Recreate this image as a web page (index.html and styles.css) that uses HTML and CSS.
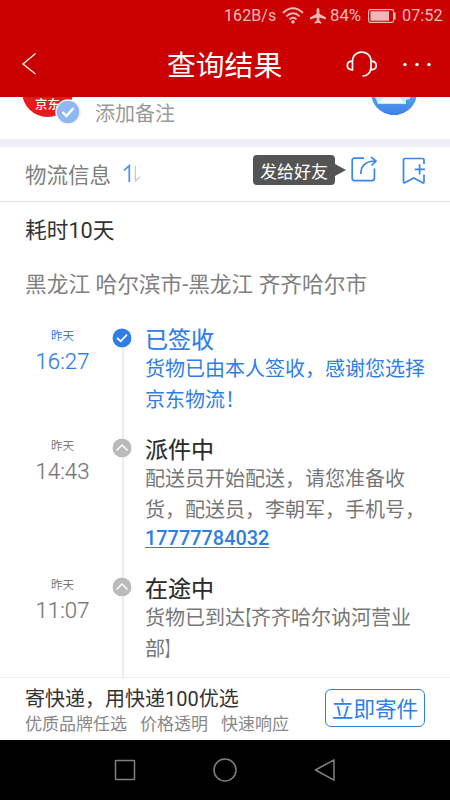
FILE: index.html
```html
<!DOCTYPE html>
<html lang="zh-CN">
<head>
<meta charset="utf-8">
<meta name="viewport" content="width=device-width, initial-scale=1">
<title>查询结果</title>
<link rel="stylesheet" href="styles.css">
</head>
<body>
<div class="phone">
  <div class="status">
    <span class="speed">162B/s</span>
    <svg class="wifi" width="22" height="17" viewBox="0 0 22 17" fill="none" stroke="currentColor" stroke-width="1.900"><path d="M1 6Q11-3.500 21 6M4.300 9.400Q11 3.200 17.700 9.400M7.500 12.400Q11 9.200 14.500 12.400"/><circle cx="11" cy="14.900" r="1.800" fill="currentColor" stroke="none"/></svg>
    <svg class="plane" width="16" height="16" viewBox="0 0 16 16" fill="currentColor"><path d="M8 0C7.200 0 6.600.8 6.600 1.600V5.800L0 9.600V11.400L6.600 9.600V12.800L4.600 14.300V15.700L8 14.800 11.400 15.700V14.300L9.400 12.800V9.600L16 11.400V9.600L9.400 5.800V1.600C9.400.8 8.800 0 8 0Z"/></svg>
    <span class="percent">84%</span>
    <svg class="battery" width="28" height="14" viewBox="0 0 28 14"><rect x=".6" y=".6" width="25" height="12.800" rx="1.800" fill="none" stroke="currentColor" stroke-width="1.200"/><rect x="2.500" y="2.300" width="18.500" height="9.400" fill="currentColor"/><path d="M26.700 3.500V10.500" stroke="currentColor" stroke-width="1.800"/></svg>
    <span class="clock">07:52</span>
  </div>
  <header class="header">
    <svg class="back" width="16" height="24" viewBox="0 0 16 24" fill="none" stroke="currentColor" stroke-width="1.200"><path d="M13.500 1.500 1 12 13.500 22"/></svg>
    <h1 class="title">查询结果</h1>
    <svg class="headset" width="32" height="27" viewBox="0 0 32 27" fill="none" stroke="currentColor" stroke-width="1.700"><path d="M6.500 10.200C6.500-2 25-2 25 10.200V16.500C24.500 21.500 21.500 25 16.500 25M6.500 10.200V18.900C3.200 18.900 1.300 17.400 1.300 14.600 1.300 11.900 3.200 10.200 6.500 10.200ZM25 10.200V18.900C28.300 18.900 30.200 17.400 30.200 14.600 30.200 11.900 28.300 10.200 25 10.200Z"/></svg>
    <svg class="dots" width="30" height="5" viewBox="0 0 30 5" fill="currentColor"><circle cx="3" cy="2.500" r="1.700"/><circle cx="15" cy="2.500" r="1.700"/><circle cx="27" cy="2.500" r="1.700"/></svg>
  </header>

  <section class="parcel">
    <div class="brand">
      <span class="brand-name">京东</span>
      <svg class="badge" width="26" height="26" viewBox="0 0 26 26"><circle cx="13" cy="13" r="12.500" fill="#fff" stroke="#e8e8ea" stroke-width=".6"/><circle cx="13" cy="13" r="11.300" fill="#8eb8f3"/><path d="M7.500 13 11.500 17 18.500 9" fill="none" stroke="#fff" stroke-width="2.400"/></svg>
    </div>
    <span class="note">添加备注</span>
    <svg class="mail" width="46" height="18" viewBox="0 0 46 18"><defs><linearGradient id="sky" x1="0" y1="0" x2="0" y2="1"><stop offset="0" stop-color="#5b9bef"/><stop offset="1" stop-color="#3b80e8"/></linearGradient></defs><path d="M.5 0A23 23 0 0 0 45.500 0Z" fill="url(#sky)"/><path d="M4 0H39V2L35 3V7H7Z" fill="#c9e9fb"/><path d="M6 6 14 .5H28L34 6Z" fill="#f3fbff"/></svg>
  </section>

  <section class="toolbar">
    <h2 class="toolbar-title">物流信息</h2>
    <svg class="sort" width="20" height="20" viewBox="0 0 20 20" fill="none"><path d="M1 6.300 6.300 1.700V18" stroke="#4b90ea" stroke-width="1.700"/><path d="M12.300 2V17L17 12.700" stroke="#c5c5c5" stroke-width="1.200"/></svg>
    <span class="tip">发给好友</span>
    <svg class="share" width="28" height="28" viewBox="0 0 28 28" fill="none" stroke="#3b86ea" stroke-width="1.700"><path d="M14 2.200H4.500Q2.200 2.200 2.200 4.500V22.300Q2.200 24.600 4.500 24.600H22Q24.400 24.600 24.400 22.300V12.500M10.800 18C10.800 10.500 15 5 25.500 5M21 .8 26 5 21.500 9.500"/></svg>
    <svg class="save" width="24" height="28" viewBox="0 0 24 28" fill="none" stroke="#3b86ea" stroke-width="1.700"><path d="M22 7V3.200Q22 1.500 20.300 1.500H3.200Q1.500 1.500 1.500 3.200V24.500Q1.500 26.400 3.200 25.500L11.800 21 20.300 25.600Q22 26.300 22 24.500V17.500M12.700 12.300H23M17.600 7.200V17.500"/></svg>
  </section>

  <main class="tracking">
    <p class="elapsed">耗时10天</p>
    <p class="route">黑龙江 哈尔滨市-黑龙江 齐齐哈尔市</p>
    <ol class="timeline">
      <li class="event event-first">
        <div class="when"><span class="day">昨天</span><span class="time">16:27</span></div>
        <div class="rail"><svg class="mark" width="20" height="20" viewBox="0 0 20 20"><circle cx="10" cy="10" r="9.500" fill="#2f7ee6"/><path d="M5 9.800 8.700 13.200 15 6.700" fill="none" stroke="#fff" stroke-width="1.700"/></svg></div>
        <div class="detail"><h3 class="state">已签收</h3><p class="text">货物已由本人签收，感谢您选择<br>京东物流！</p></div>
      </li>
      <li class="event event-second">
        <div class="when"><span class="day">昨天</span><span class="time">14:43</span></div>
        <div class="rail"><svg class="mark" width="20" height="20" viewBox="0 0 20 20"><circle cx="10" cy="10" r="9.500" fill="#bababa"/><path d="M4.500 12.500 10 7 15.500 12.500" fill="none" stroke="#fff" stroke-width="1.500"/></svg></div>
        <div class="detail"><h3 class="state">派件中</h3><p class="text">配送员开始配送，请您准备收<br>货，配送员，李朝军，手机号，<br><a class="tel">17777784032</a></p></div>
      </li>
      <li class="event event-third">
        <div class="when"><span class="day">昨天</span><span class="time">11:07</span></div>
        <div class="rail"><svg class="mark" width="20" height="20" viewBox="0 0 20 20"><circle cx="10" cy="10" r="9.500" fill="#bababa"/><path d="M4.500 12.500 10 7 15.500 12.500" fill="none" stroke="#fff" stroke-width="1.500"/></svg></div>
        <div class="detail"><h3 class="state">在途中</h3><p class="text">货物已到达<span class="bracket">【</span>齐齐哈尔讷河营业<br>部<span class="bracket">】</span></p></div>
      </li>
    </ol>
  </main>

  <footer class="promo">
    <div class="promo-copy">
      <p class="promo-title">寄快递，用快递100优选</p>
      <p class="promo-points"><span>优质品牌任选</span><span>价格透明</span><span>快速响应</span></p>
    </div>
    <button class="send">立即寄件</button>
  </footer>

  <nav class="nav">
    <svg width="24" height="24" viewBox="0 0 24 24"><rect x="2.500" y="2.500" width="19" height="19" rx=".5"/></svg>
    <svg width="24" height="24" viewBox="0 0 24 24"><circle cx="12" cy="12" r="11"/></svg>
    <svg width="24" height="24" viewBox="0 0 24 24"><path d="M21 1.800V22.200L2.500 12Z" stroke-linejoin="round"/></svg>
  </nav>
</div>
</body>
</html>
```
FILE: styles.css
```css
* { box-sizing: border-box; margin: 0; padding: 0; }
body {
  width: 450px;
  height: 800px;
  overflow: hidden;
  background: #fff;
  color: #777;
  font-family: Roboto, "Noto Sans CJK SC", sans-serif;
}
svg { display: block; flex: none; }
h1, h2, h3 { font-weight: 400; }
.phone { display: flex; flex-direction: column; height: 800px; }

.status {
  display: flex;
  align-items: center;
  height: 31px;
  padding-left: 224px;
  background: #cb0000;
  color: #f0b9b9;
  font-size: 16.300px;
  line-height: 31px;
  white-space: nowrap;
}
.speed { width: 58px; font-size: 16px; letter-spacing: .1px; }
.plane { margin-left: 6px; }
.percent { width: 33px; margin-left: 4px; font-size: 16.800px; }
.battery { margin-left: 5px; }
.clock { margin-left: 6px; }

.header {
  display: flex;
  align-items: center;
  height: 66px;
  padding-left: 22px;
  background: #cb0000;
  color: #fff;
}
.title { width: 116px; margin: 4px 0 0 129px; font-size: 28.800px; line-height: 40px; white-space: nowrap; }
.headset { margin-left: 62.500px; }
.dots { margin-left: 24px; }

.parcel {
  display: flex;
  align-items: flex-start;
  height: 50px;
  padding-left: 22px;
  border-bottom: 8px solid #eeeef3;
  flex: none;
  overflow: hidden;
}
.brand {
  position: relative;
  width: 51px;
  height: 51px;
  margin-top: -31px;
  padding-top: 30px;
  border-radius: 50%;
  background: #e51a1d;
  color: #fff;
  text-align: center;
}
.brand-name { display: block; font-size: 12.500px; font-weight: 500; line-height: 18px; }
.badge { position: absolute; left: 33px; top: 33px; }
.note { width: 80px; margin: 2px 0 0 22px; color: #999; font-size: 20px; line-height: 30px; white-space: nowrap; }
.mail { margin-left: 196px; }

.toolbar {
  display: flex;
  align-items: center;
  height: 55px;
  padding-left: 25px;
  border-bottom: 1px solid #e2e2e2;
  flex: none;
}
.toolbar-title { width: 86px; color: #808080; font-size: 21.500px; line-height: 32px; white-space: nowrap; margin-top: 4px; }
.sort { margin-left: 12px; }
.tip {
  position: relative;
  width: 82px;
  height: 30px;
  margin: -9px 0 0 110px;
  border-radius: 4px;
  background: #545454;
  color: #fff;
  font-size: 17px;
  line-height: 35px;
  text-align: center;
  white-space: nowrap;
}
.tip::after {
  content: "";
  position: absolute;
  left: 82px;
  top: 9px;
  border: solid transparent;
  border-width: 6px 0 6px 11px;
  border-left-color: #545454;
}
.share { margin: -8px 0 0 15px; }
.save { margin: -7px 0 0 24px; }

.tracking { flex: 1; min-height: 0; overflow: hidden; }
.elapsed { margin-top: 13px; padding-left: 25px; color: #333; font-size: 21.700px; line-height: 32px; }
.route { margin-top: 22px; padding-left: 25px; color: #808080; font-size: 21.700px; line-height: 32px; white-space: nowrap; }
.timeline { margin-top: 23px; list-style: none; }
.event { display: flex; }
.event-first { height: 110px; color: #2f7ee6; }
.event-second { height: 139px; }
.event-third { height: 120px; }
.when { display: flex; flex-direction: column; align-items: center; width: 75px; margin-left: 25px; padding-top: 3px; }
.day { font-size: 11.500px; line-height: 18px; }
.time { font-size: 22.200px; line-height: 32px; font-weight: 300; -webkit-text-stroke: .2px currentColor; }
.rail {
  width: 20px;
  margin-left: 12px;
  padding-top: 4px;
  background: linear-gradient(#ececec, #ececec) 10px 0 / 2px 100% no-repeat;
}
.event-first .rail { background-position: 10px 24px; }
.mark { background: #fff; border-radius: 50%; }
.detail { margin-left: 13px; padding-top: 3px; white-space: nowrap; }
.state { color: #2c2c2c; font-size: 23px; line-height: 28px; -webkit-text-stroke: .2px currentColor; }
.event-first .state { color: #2f7ee6; }
.text { margin-top: -1px; font-size: 20px; line-height: 31px; }
.event-second .text { line-height: 30.500px; }
.tel { display: block; margin-top: -1px; color: #2f7ee6; font-size: 19.900px; font-weight: 500; text-decoration: underline; text-decoration-thickness: 1px; text-underline-offset: 2px; }
.bracket {
  display: inline-block;
  width: 10px;
  margin-right: -4px;
  font-feature-settings: "halt";
  transform: scaleX(.6);
  transform-origin: left;
}

.promo {
  display: flex;
  flex: none;
  height: 63px;
  padding-left: 25px;
  border-top: 1px solid #eee;
  background: #fff;
}
.promo-copy { width: 300px; padding-top: 7px; white-space: nowrap; }
.promo-title { color: #333; font-size: 20px; line-height: 28px; }
.promo-points { display: flex; gap: 13px; color: #888; font-size: 17px; line-height: 23px; }
.send {
  width: 100px;
  height: 38px;
  margin-top: 11px;
  padding-top: 3px;
  border: 1px solid #2f7ee6;
  border-radius: 6px;
  background: #fff;
  color: #2f7ee6;
  font: 21.600px/33px Roboto, "Noto Sans CJK SC", sans-serif;
  white-space: nowrap;
}

.nav {
  display: flex;
  justify-content: center;
  align-items: center;
  gap: 76px;
  flex: none;
  height: 60px;
  background: #000;
}
.nav svg { fill: none; stroke: #808080; stroke-width: 1.500; }
```
